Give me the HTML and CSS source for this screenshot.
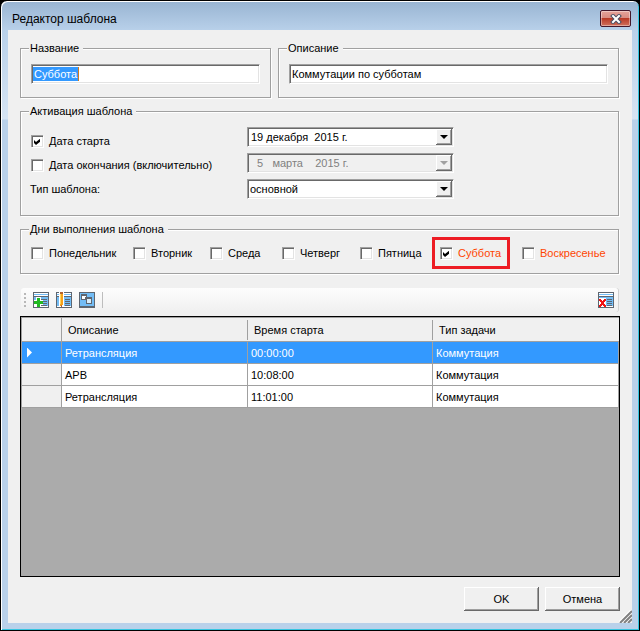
FILE: index.html
```
<!DOCTYPE html>
<html lang="ru">
<head>
    <meta charset="UTF-8">
    <meta name="viewport" content="width=device-width, initial-scale=1.0">
    <title>Редактор шаблона</title>
    <link rel="stylesheet" href="styles.css">
</head>
<body>
    <div class="window">
        <header class="titlebar">
            <h1>Редактор шаблона</h1>
            <button type="button" class="close-btn" aria-label="Закрыть">
                <svg width="12" height="10" viewBox="0 0 12 10">
                    <path d="M3 2l6 6M9 2l-6 6" stroke="#4b4f63" stroke-width="4" stroke-linecap="square"/>
                    <path d="M3 2l6 6M9 2l-6 6" stroke="#fff" stroke-width="2" stroke-linecap="square"/>
                </svg>
            </button>
        </header>

        <form class="client">
            <div class="info">
                <fieldset>
                    <legend><label for="name">Название</label></legend>
                    <div class="field">
                        <input type="text" id="name" value="Суббота">
                        <span class="selection" aria-hidden="true">Суббота</span>
                    </div>
                </fieldset>
                <fieldset>
                    <legend><label for="description">Описание</label></legend>
                    <div class="field">
                        <input type="text" id="description" value="Коммутации по субботам">
                    </div>
                </fieldset>
            </div>

            <fieldset class="activation">
                <legend>Активация шаблона</legend>
                <div class="activation-labels">
                    <label class="check"><input type="checkbox" checked>Дата старта</label>
                    <label class="check"><input type="checkbox">Дата окончания (включительно)</label>
                    <label for="type">Тип шаблона:</label>
                </div>
                <div class="activation-values">
                    <div class="field date">
                        <input type="text" value="19 декабря  2015 г." aria-label="Дата старта">
                        <button type="button" class="arrow" aria-label="Открыть календарь"></button>
                    </div>
                    <div class="field date disabled">
                        <input type="text" value="  5   марта    2015 г." aria-label="Дата окончания" disabled>
                        <button type="button" class="arrow" aria-label="Открыть календарь" disabled></button>
                    </div>
                    <div class="field">
                        <select id="type">
                            <option>основной</option>
                        </select>
                        <span class="arrow"></span>
                    </div>
                </div>
            </fieldset>

            <fieldset class="days">
                <legend>Дни выполнения шаблона</legend>
                <div class="days-row">
                    <label class="check"><input type="checkbox">Понедельник</label>
                    <label class="check"><input type="checkbox">Вторник</label>
                    <label class="check"><input type="checkbox">Среда</label>
                    <label class="check"><input type="checkbox">Четверг</label>
                    <label class="check"><input type="checkbox">Пятница</label>
                    <label class="check weekend marked"><input type="checkbox" checked>Суббота</label>
                    <label class="check weekend"><input type="checkbox">Воскресенье</label>
                </div>
            </fieldset>

            <div class="toolbar">
                <span class="grip"></span>
                <button type="button" aria-label="Добавить">
                    <svg width="16" height="16" viewBox="0 0 16 16" shape-rendering="crispEdges">
                        <rect width="16" height="16" fill="#5e6670"/>
                        <rect x="1" y="1" width="14" height="14" fill="#fff"/>
                        <path d="M1 2h14v1H1zM1 5h14v9H1z" fill="#73bdf6"/>
                        <path d="M1 4h14v1H1zM8 7h6v1H8zM10 9h4v1h-4zM10 11h4v1h-4zM8 13h6v1H8z" fill="#5e6670"/>
                        <path d="M3 5h5v3h2v5H8v2H1V8h2z" fill="#fff"/>
                        <path d="M4 6h3v3h3v3H7v3H4v-3H1V9h3z" fill="#22b922"/>
                    </svg>
                </button>
                <button type="button" aria-label="Изменить">
                    <svg width="16" height="16" viewBox="0 0 16 16" shape-rendering="crispEdges">
                        <rect width="16" height="16" fill="#5e6670"/>
                        <rect x="1" y="1" width="14" height="14" fill="#fff"/>
                        <path d="M1 2h14v1H1zM1 5h14v9H1z" fill="#73bdf6"/>
                        <path d="M1 4h14v1H1zM9 7h5v1H9zM9 9h5v1H9zM9 11h5v1H9zM9 13h5v1H9z" fill="#5e6670"/>
                        <path d="M3 0h5v15H3z" fill="#fff"/>
                        <path d="M4 1h3v11l-1 3H5l-1-3z" fill="#f6a21c"/>
                        <path d="M4 1h1v11H4z" fill="#ffd45e"/>
                        <path d="M4 0h3v2H4zM5 13h1v2H5z" fill="#b5622b"/>
                    </svg>
                </button>
                <button type="button" aria-label="Копировать">
                    <svg width="16" height="16" viewBox="0 0 16 16" shape-rendering="crispEdges">
                        <rect width="16" height="16" fill="#5e6670"/>
                        <rect x="1" y="1" width="14" height="13" fill="#73bdf6"/>
                        <path d="M2 2h6v6H2zM7 5h6v7H7z" fill="#5e6670"/>
                        <path d="M3 4h4v1H6v2H3z" fill="#fff"/>
                        <path d="M8 7h4v4H8z" fill="#d9eefc"/>
                    </svg>
                </button>
                <span class="separator"></span>
                <button type="button" class="delete-btn" aria-label="Удалить">
                    <svg width="16" height="16" viewBox="0 0 16 16" shape-rendering="crispEdges">
                        <rect width="16" height="16" fill="#5e6670"/>
                        <rect x="1" y="1" width="14" height="14" fill="#fff"/>
                        <path d="M1 2h14v1H1zM1 5h14v9H1z" fill="#73bdf6"/>
                        <path d="M1 4h14v1H1zM9 7h5v1H9zM9 9h5v1H9zM9 11h5v1H9zM9 13h5v1H9z" fill="#5e6670"/>
                        <path d="M1 6h7v9H1z" fill="#fff"/>
                        <path d="M1 7h2v1h1v1h1V8h1V7h2v2H7v1H6v2h1v1h1v2H6v-1H5v-1H4v1H3v1H1v-2h1v-1h1v-2H2V9H1z" fill="#f01414"/>
                    </svg>
                </button>
            </div>

            <div class="grid">
                <table>
                    <thead>
                        <tr>
                            <th class="row-head"></th>
                            <th class="col-description"><span>Описание</span></th>
                            <th class="col-time"><span>Время старта</span></th>
                            <th><span>Тип задачи</span></th>
                        </tr>
                    </thead>
                    <tbody>
                        <tr class="selected">
                            <td class="row-head"><span class="pointer"></span></td>
                            <td>Ретрансляция</td>
                            <td>00:00:00</td>
                            <td>Коммутация</td>
                        </tr>
                        <tr>
                            <td class="row-head"></td>
                            <td>АРВ</td>
                            <td>10:08:00</td>
                            <td>Коммутация</td>
                        </tr>
                        <tr>
                            <td class="row-head"></td>
                            <td>Ретрансляция</td>
                            <td>11:01:00</td>
                            <td>Коммутация</td>
                        </tr>
                    </tbody>
                </table>
            </div>

            <div class="buttons">
                <button type="button">OK</button>
                <button type="button">Отмена</button>
            </div>

            <svg class="resize-grip" width="13" height="13" viewBox="0 0 13 13">
                <path d="M0 13L13 0M4 13l9-9M8 13l5-5" stroke="#fff" stroke-width="3"/>
                <path d="M1 13L13 1M5 13l8-8M9 13l4-4" stroke="#808080" stroke-width="2"/>
            </svg>
        </form>
    </div>
</body>
</html>
```

FILE: styles.css
```
* {
    margin: 0;
    padding: 0;
    box-sizing: border-box;
}

body {
    background: #000;
    color: #000;
    font: 11px/14px "Liberation Sans", Arial, sans-serif;
}

input,
select,
button {
    font: inherit;
    color: inherit;
    border: none;
    outline: none;
    background: none;
}

.window {
    display: flex;
    flex-direction: column;
    min-height: 100vh;
    padding: 0 6px 6px;
    border: 1px solid #000;
    border-radius: 7px 7px 0 0;
    background: linear-gradient(#98b4d2, #b9d1ea 30px, #d6e4f3 118px, #b9d1ea 119px);
    box-shadow: inset 1px 1px #fff, inset -1px -1px #35c5e0;
}

/* Title bar */

.titlebar {
    display: flex;
    justify-content: space-between;
    align-items: center;
    height: 29px;
    padding: 6px 2px 0 5px;
}

h1 {
    font-size: 12px;
    font-weight: normal;
}

.close-btn {
    display: flex;
    justify-content: center;
    align-items: center;
    width: 31px;
    height: 17px;
    border: 1px solid #43172a;
    border-radius: 2px;
    background: linear-gradient(#e5a39a, #d98b80 48%, #b93a26 50%, #d0705c);
    box-shadow: inset 0 0 0 1px rgba(255, 255, 255, 0.4);
}

.client {
    position: relative;
    flex: 1;
    display: flex;
    flex-direction: column;
    margin: 0 1px 1px;
    padding: 11px 13px 12px 12px;
    background: #f0f0f0;
}

/* Group boxes */

fieldset {
    min-width: 0;
    padding: 9px 10px 13px;
    border: 1px solid #a0a0a0;
    box-shadow: 1px 1px #fff, inset 1px 1px #fff;
}

legend {
    height: 14px;
    margin-left: -2px;
    padding: 0 4px 0 1px;
    background: #f0f0f0;
}

.info {
    display: grid;
    grid-template-columns: 251fr 341fr;
    gap: 7px;
    margin-bottom: 6px;
}

.field {
    position: relative;
    display: flex;
    height: 20px;
    border: 1px solid;
    border-color: #a0a0a0 #fff #fff #a0a0a0;
    background: #fff;
    box-shadow: inset 1px 1px #696969, inset -1px -1px #e3e3e3;
}

.field input,
.field select {
    flex: 1;
    min-width: 0;
    padding: 0 2px;
    appearance: none;
}

.date input {
    padding: 0 3px;
}

.selection {
    position: absolute;
    top: 2px;
    left: 1px;
    padding: 0 1px;
    border-right: 1px solid #d07a1e;
    background: #3399ff;
    color: #fff;
    pointer-events: none;
}

.arrow {
    position: absolute;
    top: 1px;
    right: 1px;
    display: flex;
    justify-content: center;
    align-items: center;
    width: 16px;
    height: 16px;
    background: #f0f0f0;
    box-shadow: inset -1px -1px #696969, inset 1px 1px #fff, inset -2px -2px #a0a0a0;
    pointer-events: none;
}

.arrow::before {
    content: '';
    border: 4px solid transparent;
    border-top-color: #000;
    border-bottom: none;
}

.disabled {
    background: #f0f0f0;
    color: #808080;
}

.disabled .arrow::before {
    border-top-color: #a0a0a0;
}

.check {
    display: flex;
    align-items: center;
    gap: 6px;
    white-space: nowrap;
}

.check input {
    flex: none;
    display: flex;
    width: 12px;
    height: 12px;
    appearance: none;
    background: #fff;
    box-shadow: inset 1px 1px #a0a0a0, inset 2px 2px #696969, inset -1px -1px #e3e3e3, 1px 1px #fff;
}

.check input:checked::before {
    content: '';
    width: 7px;
    height: 7px;
    margin: 3px;
    background: #000;
    clip-path: polygon(0 2px, 2px 4px, 7px 0, 7px 3px, 2px 7px, 0 5px);
}

/* Activation */

.activation {
    display: grid;
    grid-template-columns: 216fr 207fr 154fr;
    margin-bottom: 6px;
    padding-bottom: 16px;
}

.activation-labels,
.activation-values {
    display: flex;
    flex-direction: column;
    gap: 6px;
}

.activation-labels {
    gap: 4px;
    padding-top: 4px;
}

.activation-labels label {
    height: 20px;
    line-height: 20px;
}

.activation-labels label:last-child {
    margin-left: -1px;
}

/* Days */

.days {
    margin-bottom: 14px;
    padding-top: 10px;
}

.days-row {
    display: grid;
    grid-template-columns: 102fr 77fr 72fr 78fr 80fr 82fr 86fr;
}

.weekend {
    color: #ff4500;
}

.marked {
    position: relative;
}

.marked::after {
    content: '';
    position: absolute;
    inset: -9px 12px -9px -8px;
    border: 3px solid #ed1c24;
}

/* Toolbar */

.toolbar {
    display: flex;
    align-items: center;
    gap: 7px;
    height: 24px;
    margin: 0 1px 4px;
    padding: 0 4px 0 3px;
    border-radius: 3px;
    background: linear-gradient(#fdfdfd, #f0f0f0);
    box-shadow: 1px 0 #d0d0d0;
}

.toolbar svg {
    display: block;
}

.grip {
    width: 2px;
    height: 14px;
    background: repeating-linear-gradient(#b8b8b8 0 2px, transparent 2px 4px);
}

.separator {
    width: 1px;
    height: 16px;
    background: #bdbdbd;
}

.delete-btn {
    margin-left: auto;
}

/* Task grid */

.grid {
    flex: 1;
    min-height: 200px;
    margin-right: -1px;
    border: 1px solid #000;
    background: #ababab;
}

table {
    width: 100%;
    border-collapse: separate;
    border-spacing: 0;
    border-top: 1px solid #a0a0a0;
    border-left: 1px solid #a0a0a0;
    table-layout: fixed;
}

th,
td {
    height: 22px;
    padding: 0 3px;
    border-right: 1px solid #a0a0a0;
    border-bottom: 1px solid #a0a0a0;
    background: #fff;
    font-weight: normal;
    text-align: left;
}

th {
    height: 24px;
    padding: 0;
    border-right: none;
    background: #f0f0f0;
}

th span {
    display: block;
    padding: 3px 6px;
    border-right: 1px solid #a0a0a0;
}

th:last-child span {
    border-right: none;
}

.row-head {
    width: 40px;
    padding: 0 5px;
    border-right: 1px solid #a0a0a0;
    background: #f0f0f0;
}

.col-description {
    width: 186px;
}

.col-time {
    width: 185px;
}

.selected td {
    background: #3399ff;
    color: #fff;
}

.pointer {
    display: block;
    width: 5px;
    height: 10px;
    background: #fff;
    clip-path: polygon(0 0, 100% 50%, 0 100%);
}

/* Dialog buttons */

.buttons {
    display: flex;
    justify-content: flex-end;
    gap: 6px;
    margin: 10px -1px 0 0;
}

.buttons button {
    width: 75px;
    height: 24px;
    background: #f0f0f0;
    box-shadow: inset -1px -1px #696969, inset 1px 1px #fff, inset -2px -2px #a0a0a0;
}

.resize-grip {
    position: absolute;
    right: 0;
    bottom: 0;
}
```
